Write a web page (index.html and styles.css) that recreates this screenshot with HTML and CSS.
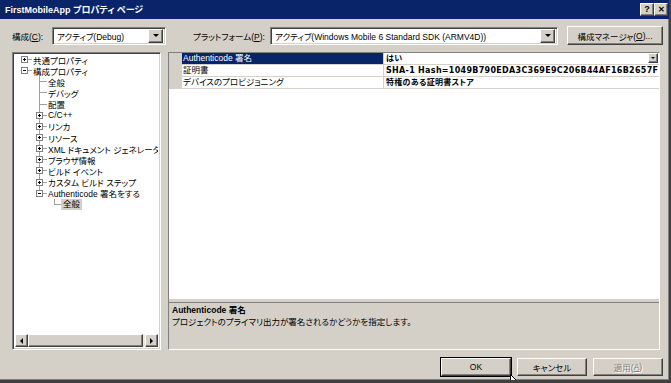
FILE: index.html
```html
<!DOCTYPE html>
<html>
	<head>
		<meta content="text/html;charset=utf-8" http-equiv="Content-Type">
		<link rel="stylesheet" href="styles.css">
	</head>
	<body>
		<div class="window">
			<div class="titlebar">
				<span class="caption">FirstMobileApp プロパティ ページ</span>
				<span class="capbtn">?</span>
				<span class="capbtn close">&#x2715;</span>
			</div>

			<div class="toolbar">
				<span class="label cfg-label">構成(<u>C</u>):</span>
				<div class="combo cfg-combo">
					<span class="combo-text">アクティブ(Debug)</span>
					<span class="combo-btn"><i class="down"></i></span>
				</div>
				<span class="label plat-label">プラットフォーム(<u>P</u>):</span>
				<div class="combo plat-combo">
					<span class="combo-text">アクティブ(Windows Mobile 6 Standard SDK (ARMV4D))</span>
					<span class="combo-btn"><i class="down"></i></span>
				</div>
				<span class="button mgr-btn">構成マネージャ(<u>O</u>)...</span>
			</div>

			<div class="main">
				<div class="tree sunken">
					<div class="nodes">
						<div class="node"><span class="twig root"><i class="box plus"></i></span><span class="text">共通プロパティ</span></div>
						<div class="node"><span class="twig root"><i class="box"></i></span><span class="text">構成プロパティ</span></div>
						<div class="node"><span class="twig"></span><span class="twig tee"></span><span class="text">全般</span></div>
						<div class="node"><span class="twig"></span><span class="twig tee"></span><span class="text">デバッグ</span></div>
						<div class="node"><span class="twig"></span><span class="twig tee"></span><span class="text">配置</span></div>
						<div class="node"><span class="twig"></span><span class="twig tee"><i class="box plus"></i></span><span class="text">C/C++</span></div>
						<div class="node"><span class="twig"></span><span class="twig tee"><i class="box plus"></i></span><span class="text">リンカ</span></div>
						<div class="node"><span class="twig"></span><span class="twig tee"><i class="box plus"></i></span><span class="text">リソース</span></div>
						<div class="node"><span class="twig"></span><span class="twig tee"><i class="box plus"></i></span><span class="text">XML ドキュメント ジェネレータ</span></div>
						<div class="node"><span class="twig"></span><span class="twig tee"><i class="box plus"></i></span><span class="text">ブラウザ情報</span></div>
						<div class="node"><span class="twig"></span><span class="twig tee"><i class="box plus"></i></span><span class="text">ビルド イベント</span></div>
						<div class="node"><span class="twig"></span><span class="twig tee"><i class="box plus"></i></span><span class="text">カスタム ビルド ステップ</span></div>
						<div class="node"><span class="twig"></span><span class="twig elbow"><i class="box"></i></span><span class="text">Authenticode 署名をする</span></div>
						<div class="node"><span class="twig"></span><span class="twig"></span><span class="twig elbow"></span><span class="text selected">全般</span></div>
					</div>
					<div class="hscroll">
						<span class="sbtn"><i class="left"></i></span>
						<span class="thumb"></span>
						<span class="sbtn"><i class="right"></i></span>
					</div>
				</div>

				<div class="props">
					<div class="grid">
						<div class="prop">
							<span class="gutter"></span>
							<span class="pname active">Authenticode 署名</span>
							<span class="pvalue">はい<span class="drop"><i class="down"></i></span></span>
						</div>
						<div class="prop">
							<span class="gutter"></span>
							<span class="pname">証明書</span>
							<span class="pvalue">SHA-1 Hash=1049B790EDA3C369E9C206B44AF16B2657F</span>
						</div>
						<div class="prop">
							<span class="gutter"></span>
							<span class="pname">デバイスのプロビジョニング</span>
							<span class="pvalue">特権のある証明書ストア</span>
						</div>
					</div>
					<div class="desc">
						<div class="desc-title">Authenticode 署名</div>
						<div>プロジェクトのプライマリ出力が署名されるかどうかを指定します。</div>
					</div>
				</div>
			</div>

			<div class="actions">
				<span class="button default">OK</span>
				<span class="button">キャンセル</span>
				<span class="button disabled">適用(<u>A</u>)</span>
			</div>

			<svg class="cursor" width="12" height="19" viewBox="0 0 12 19">
				<path d="M0.5 0.5 L0.5 16 L4.5 12.5 L7 18.5 L9 17.5 L6.5 11.5 L11.5 11.5 Z" fill="#fff" stroke="#000" stroke-width="1"/>
			</svg>
		</div>
	</body>
</html>
```

FILE: styles.css
```css
body {
	margin: 0;
	font-family: "Liberation Sans", "Noto Sans CJK JP", sans-serif;
	font-size: 8.5px;
	font-feature-settings: "palt";
	color: #000;
	background: #404040;
}
u {
	text-decoration: underline;
}

.window {
	position: relative;
	width: 669px;
	height: 380px;
	background: #d4d0c8;
	display: flex;
	flex-direction: column;
	border-right: 2px solid #404040;
	border-bottom: 3px solid #404040;
	box-shadow: inset -1px -1px #808080;
	overflow: hidden;
}

/* caption */
.titlebar {
	height: 19px;
	background: #0a246a;
	color: #fff;
	display: flex;
	align-items: center;
	padding: 0 1px 0 5px;
	flex: none;
}
.caption {
	font-size: 9px;
	font-weight: bold;
	flex: 1;
}
.capbtn {
	width: 12px;
	height: 11px;
	background: #d4d0c8;
	color: #000;
	font-weight: bold;
	font-size: 9px;
	line-height: 11px;
	text-align: center;
	border: 1px solid;
	border-color: #fff #404040 #404040 #fff;
	box-shadow: inset -1px -1px #808080;
}
.close {
	font-size: 8px;
}

/* raised and sunken edges */
.button, .combo-btn, .sbtn, .thumb, .drop {
	background: #d4d0c8;
	border: 1px solid;
	border-color: #fff #404040 #404040 #fff;
	box-shadow: inset -1px -1px #808080;
	box-sizing: border-box;
}
.sunken, .combo {
	border: 1px solid;
	border-color: #808080 #fff #fff #808080;
	box-shadow: inset 1px 1px #404040, inset -1px -1px #d4d0c8;
	box-sizing: border-box;
}

.toolbar {
	display: flex;
	align-items: center;
	height: 19px;
	margin: 7px 0 0 12px;
	flex: none;
}
.label {
	white-space: nowrap;
}
.cfg-label {
	width: 40px;
}
.plat-label {
	width: 77px;
	margin-left: 27px;
}
.combo {
	height: 18px;
	background: #fff;
	display: flex;
	align-items: center;
	padding: 2px;
}
.cfg-combo {
	width: 114px;
}
.plat-combo {
	width: 288px;
}
.combo-text {
	flex: 1;
	padding-left: 2px;
	white-space: nowrap;
	overflow: hidden;
}
.combo-btn {
	width: 15px;
	height: 14px;
	display: flex;
	align-items: center;
	justify-content: center;
	flex: none;
}
.down {
	width: 0;
	height: 0;
	border-left: 3px solid transparent;
	border-right: 3px solid transparent;
	border-top: 3px solid #000;
}
.button {
	display: flex;
	align-items: center;
	justify-content: center;
	white-space: nowrap;
}
.mgr-btn {
	width: 96px;
	height: 19px;
	margin-left: 9px;
}

/* main area */
.main {
	display: flex;
	height: 298px;
	margin: 7px 0 0 12px;
	flex: none;
}
.tree {
	width: 149px;
	background: #fff;
	display: flex;
	flex-direction: column;
	padding: 2px;
}
.nodes {
	flex: 1;
	padding-left: 2px;
	margin-top: -1px;
	overflow: hidden;
}
.node {
	display: flex;
	align-items: center;
	height: 11.15px;
	white-space: nowrap;
}
.twig {
	width: 15px;
	height: 100%;
	flex: none;
	display: flex;
	align-items: center;
	justify-content: center;
}
.root {
	background: linear-gradient(#a0a0a0, #a0a0a0) 7px 50% / 8px 1px no-repeat;
}
.tee {
	background:
		linear-gradient(#a0a0a0, #a0a0a0) 7px 0 / 1px 100% no-repeat,
		linear-gradient(#a0a0a0, #a0a0a0) 7px 50% / 8px 1px no-repeat;
}
.elbow {
	background:
		linear-gradient(#a0a0a0, #a0a0a0) 7px 0 / 1px 50% no-repeat,
		linear-gradient(#a0a0a0, #a0a0a0) 7px 50% / 8px 1px no-repeat;
}
.box {
	width: 7px;
	height: 7px;
	box-sizing: border-box;
	border: 1px solid #808080;
	background: linear-gradient(#000, #000) center / 3px 1px no-repeat, #fff;
}
.box.plus {
	background:
		linear-gradient(#000, #000) center / 3px 1px no-repeat,
		linear-gradient(#000, #000) center / 1px 3px no-repeat,
		#fff;
}
.text {
	padding-left: 1px;
}
.selected {
	background: #d4d0c8;
	padding: 0 2px;
	margin-left: -1px;
	line-height: 11px;
}

.hscroll {
	display: flex;
	height: 13px;
	background: #ece9e4;
}
.sbtn {
	width: 13px;
	height: 13px;
	display: flex;
	align-items: center;
	justify-content: center;
}
.thumb {
	flex: 1;
	margin-right: 2px;
}
.left {
	border-top: 3px solid transparent;
	border-bottom: 3px solid transparent;
	border-right: 3px solid #000;
}
.right {
	border-top: 3px solid transparent;
	border-bottom: 3px solid transparent;
	border-left: 3px solid #000;
}

/* property grid */
.props {
	width: 492px;
	margin-left: 7px;
	display: flex;
	flex-direction: column;
	border: 1px solid;
	border-color: #808080 #fff #fff #808080;
	box-sizing: border-box;
}
.grid {
	flex: 1;
	background: #fff;
}
.prop {
	display: flex;
	height: 12px;
	line-height: 11px;
	white-space: nowrap;
}
.gutter {
	width: 13px;
	background: #d4d0c8;
	flex: none;
}
.pname {
	width: 202px;
	flex: none;
	padding-left: 1px;
	box-sizing: border-box;
	border-right: 1px solid #d4d0c8;
	border-bottom: 1px solid #d4d0c8;
	overflow: hidden;
}
.pname.active {
	background: #0a246a;
	color: #fff;
}
.pvalue {
	flex: 1;
	display: flex;
	padding-left: 2px;
	font-family: "DejaVu Sans", "Noto Sans CJK JP", sans-serif;
	font-size: 8px;
	font-weight: bold;
	letter-spacing: 0.3px;
	border-bottom: 1px solid #d4d0c8;
	overflow: hidden;
}
.drop {
	margin-left: auto;
	margin-right: 1px;
	width: 10px;
	height: 10px;
	display: flex;
	align-items: center;
	justify-content: center;
	font-weight: normal;
}
.drop .down {
	border-left-width: 2px;
	border-right-width: 2px;
	border-top-width: 2px;
}
.desc {
	height: 47px;
	margin-top: 3px;
	border-top: 1px solid #808080;
	padding: 1px 3px;
	line-height: 12px;
	box-sizing: border-box;
}
.desc-title {
	font-weight: bold;
}

/* dialog buttons */
.actions {
	display: flex;
	justify-content: flex-end;
	gap: 6px;
	height: 18px;
	margin: 8px 6px 0 0;
	flex: none;
}
.actions .button {
	width: 70px;
}
.default {
	outline: 1px solid #000;
}
.disabled {
	color: #808080;
	text-shadow: 1px 1px #fff;
}

.cursor {
	position: absolute;
	left: 510px;
	top: 374px;
}
```
